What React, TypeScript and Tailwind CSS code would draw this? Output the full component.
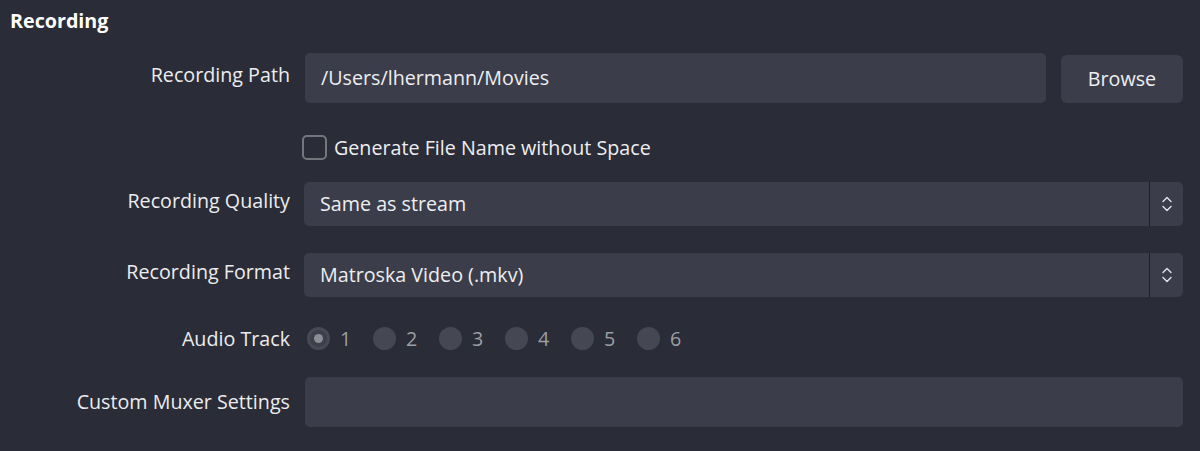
import React from "react";

const font = { fontFamily: '"Open Sans", "Noto Sans", sans-serif' };

const Label = ({ children, raised }: { children: React.ReactNode; raised?: boolean }) => (
  <div
    className={
      raised
        ? "w-[290px] shrink-0 -translate-y-[3px] text-right text-[19.7px] text-[#ececef]"
        : "w-[290px] shrink-0 text-right text-[19.7px] text-[#ececef]"
    }
  >
    {children}
  </div>
);

const Spinner = () => (
  <div className="flex w-[34px] shrink-0 items-center justify-center border-l border-[#1c1e26]">
    <svg width="12" height="18" viewBox="0 0 12 18" fill="none">
      <path d="M2 6.5 L6 2.5 L10 6.5" stroke="#e4e5e9" strokeWidth="1.4" strokeLinecap="round" strokeLinejoin="round" />
      <path d="M2 11.5 L6 15.5 L10 11.5" stroke="#e4e5e9" strokeWidth="1.4" strokeLinecap="round" strokeLinejoin="round" />
    </svg>
  </div>
);

const Select = ({ value }: { value: string }) => (
  <div className="flex h-[44px] flex-1 rounded-[5px] bg-[#3b3e4a]">
    <div className="flex flex-1 items-center pl-[16px] text-[19.7px] text-[#eeeef1]">{value}</div>
    <Spinner />
  </div>
);

const App = () => {
  const tracks = [1, 2, 3, 4, 5, 6];

  return (
    <div className="h-[451px] w-[1200px] overflow-hidden bg-[#2a2c37]" style={font}>
      {/* Section title */}
      <div className="pl-[10px] pt-[8px] text-[19.7px] font-bold leading-[26px] text-white">
        Recording
      </div>

      <div className="pr-[17px]">
        {/* Recording Path */}
        <div className="mt-[19px] flex h-[50px] items-center gap-[15px]">
          <Label raised>Recording Path</Label>
          <div className="flex h-[50px] flex-1 items-center rounded-[5px] bg-[#3b3e4a] pl-[16px] text-[19.7px] text-[#eeeef1]">
            /Users/lhermann/Movies
          </div>
          <button className="h-[48px] w-[122px] self-end rounded-[6px] bg-[#3b3e4a] text-[19.7px] text-[#eeeef1]">
            Browse
          </button>
        </div>

        {/* Checkbox */}
        <div className="mt-[32px] flex h-[25px] items-center pl-[302px]">
          <div className="h-[25px] w-[25px] rounded-[5px] border-2 border-[#74767e]" />
          <span className="ml-[7px] text-[19.7px] text-[#eeeef1]">Generate File Name without Space</span>
        </div>

        {/* Recording Quality */}
        <div className="mt-[22px] flex items-center gap-[14px]">
          <Label raised>Recording Quality</Label>
          <Select value="Same as stream" />
        </div>

        {/* Recording Format */}
        <div className="mt-[27px] flex items-center gap-[14px]">
          <Label raised>Recording Format</Label>
          <Select value="Matroska Video (.mkv)" />
        </div>

        {/* Audio Track */}
        <div className="mt-[30px] flex h-[23px] items-center gap-[17px]">
          <Label>Audio Track</Label>
          <div className="flex items-center gap-[20px]">
            {tracks.map((t) => (
              <div key={t} className="flex w-[46px] items-center gap-[10px]">
                {t === 1 ? (
                  <div className="flex h-[23px] w-[23px] items-center justify-center rounded-full border-[3px] border-[#474a56] bg-[#3d404b]">
                    <div className="h-[9px] w-[9px] rounded-full bg-[#8c8e95]" />
                  </div>
                ) : (
                  <div className="h-[23px] w-[23px] rounded-full bg-[#454853]" />
                )}
                <span className="text-[19.7px] text-[#9c9ea5]">{t}</span>
              </div>
            ))}
          </div>
        </div>

        {/* Custom Muxer Settings */}
        <div className="mt-[27px] flex h-[50px] items-center gap-[15px]">
          <Label>Custom Muxer Settings</Label>
          <div className="h-[50px] flex-1 rounded-[5px] bg-[#3b3e4a]" />
        </div>
      </div>
    </div>
  );
};

export default App;
